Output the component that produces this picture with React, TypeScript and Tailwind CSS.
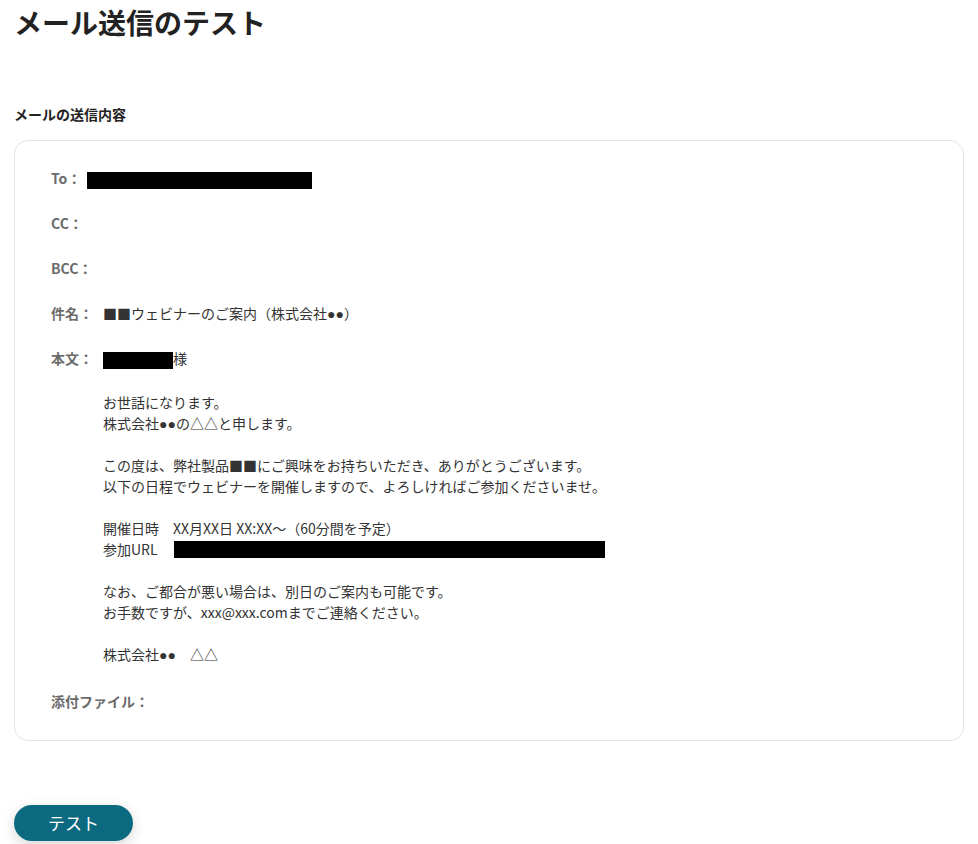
import React from 'react';

const FONT = { fontFamily: '"Noto Sans CJK JP", "Noto Sans", sans-serif' };

const Redact: React.FC<{ w: string }> = ({ w }) => (
  <span className={`inline-block h-[17px] bg-black align-middle ${w}`}></span>
);

// small round bullets as in the reference (●●)
const Dots: React.FC = () => (
  <span className="leading-none" style={{ fontFamily: '"Liberation Sans", Arial, sans-serif' }}>
    ●●
  </span>
);

const Row: React.FC<{ label: string; children?: React.ReactNode; gap?: string }> = ({ label, children, gap = 'gap-[10px]' }) => (
  <div className={`flex items-start ${gap}`}>
    <span className="shrink-0 font-bold text-[#6b6b6b]">{label}</span>
    <div className="text-[#333]">{children}</div>
  </div>
);

const App: React.FC = () => {
  return (
    <div className="min-h-screen bg-white px-[14px] text-[14px]" style={FONT}>
      <h1 className="pt-[2px] text-[28px] font-bold leading-[40px] text-[#222]">メール送信のテスト</h1>

      <h2 className="mt-[62px] text-[14px] font-bold leading-[20px] text-[#222]">メールの送信内容</h2>

      <div className="mt-[16px] rounded-[14px] border border-[#e3e3e3] pl-[36px] pr-6 pt-[27px] pb-[28px]">
        <div className="flex flex-col gap-[24px] leading-[21px]">
          <Row label="To：" gap="gap-[6px]">
            <Redact w="w-[225px]" />
          </Row>
          <Row label="CC：" />
          <Row label="BCC：" />
          <Row label="件名：">
            ■■ウェビナーのご案内（株式会社<Dots />）
          </Row>
          <Row label="本文：">
            <div className="pb-[2px]">
              <div className="h-[21px]">
                <Redact w="w-[70px]" />様
              </div>
              <div className="mt-[23px]">お世話になります。</div>
              <div>
                株式会社<Dots />の△△と申します。
              </div>
              <div className="mt-[21px]">この度は、弊社製品■■にご興味をお持ちいただき、ありがとうございます。</div>
              <div>以下の日程でウェビナーを開催しますので、よろしければご参加くださいませ。</div>
              <div className="mt-[21px]">開催日時　XX月XX日 XX:XX～（60分間を予定）</div>
              <div className="flex h-[21px] items-center">
                <span className="w-[71px]">参加URL</span>
                <Redact w="w-[431px]" />
              </div>
              <div className="mt-[21px]">なお、ご都合が悪い場合は、別日のご案内も可能です。</div>
              <div>お手数ですが、xxx@xxx.comまでご連絡ください。</div>
              <div className="mt-[21px]">
                株式会社<Dots />　△△
              </div>
            </div>
          </Row>
          <Row label="添付ファイル：" />
        </div>
      </div>

      <div className="pt-[64px] pb-[3px]">
        <button className="h-[36px] w-[119px] rounded-full bg-[#0b6a80] text-[17px] text-white shadow-[0_4px_14px_rgba(0,0,0,0.16)]">
          テスト
        </button>
      </div>
    </div>
  );
};

export default App;
